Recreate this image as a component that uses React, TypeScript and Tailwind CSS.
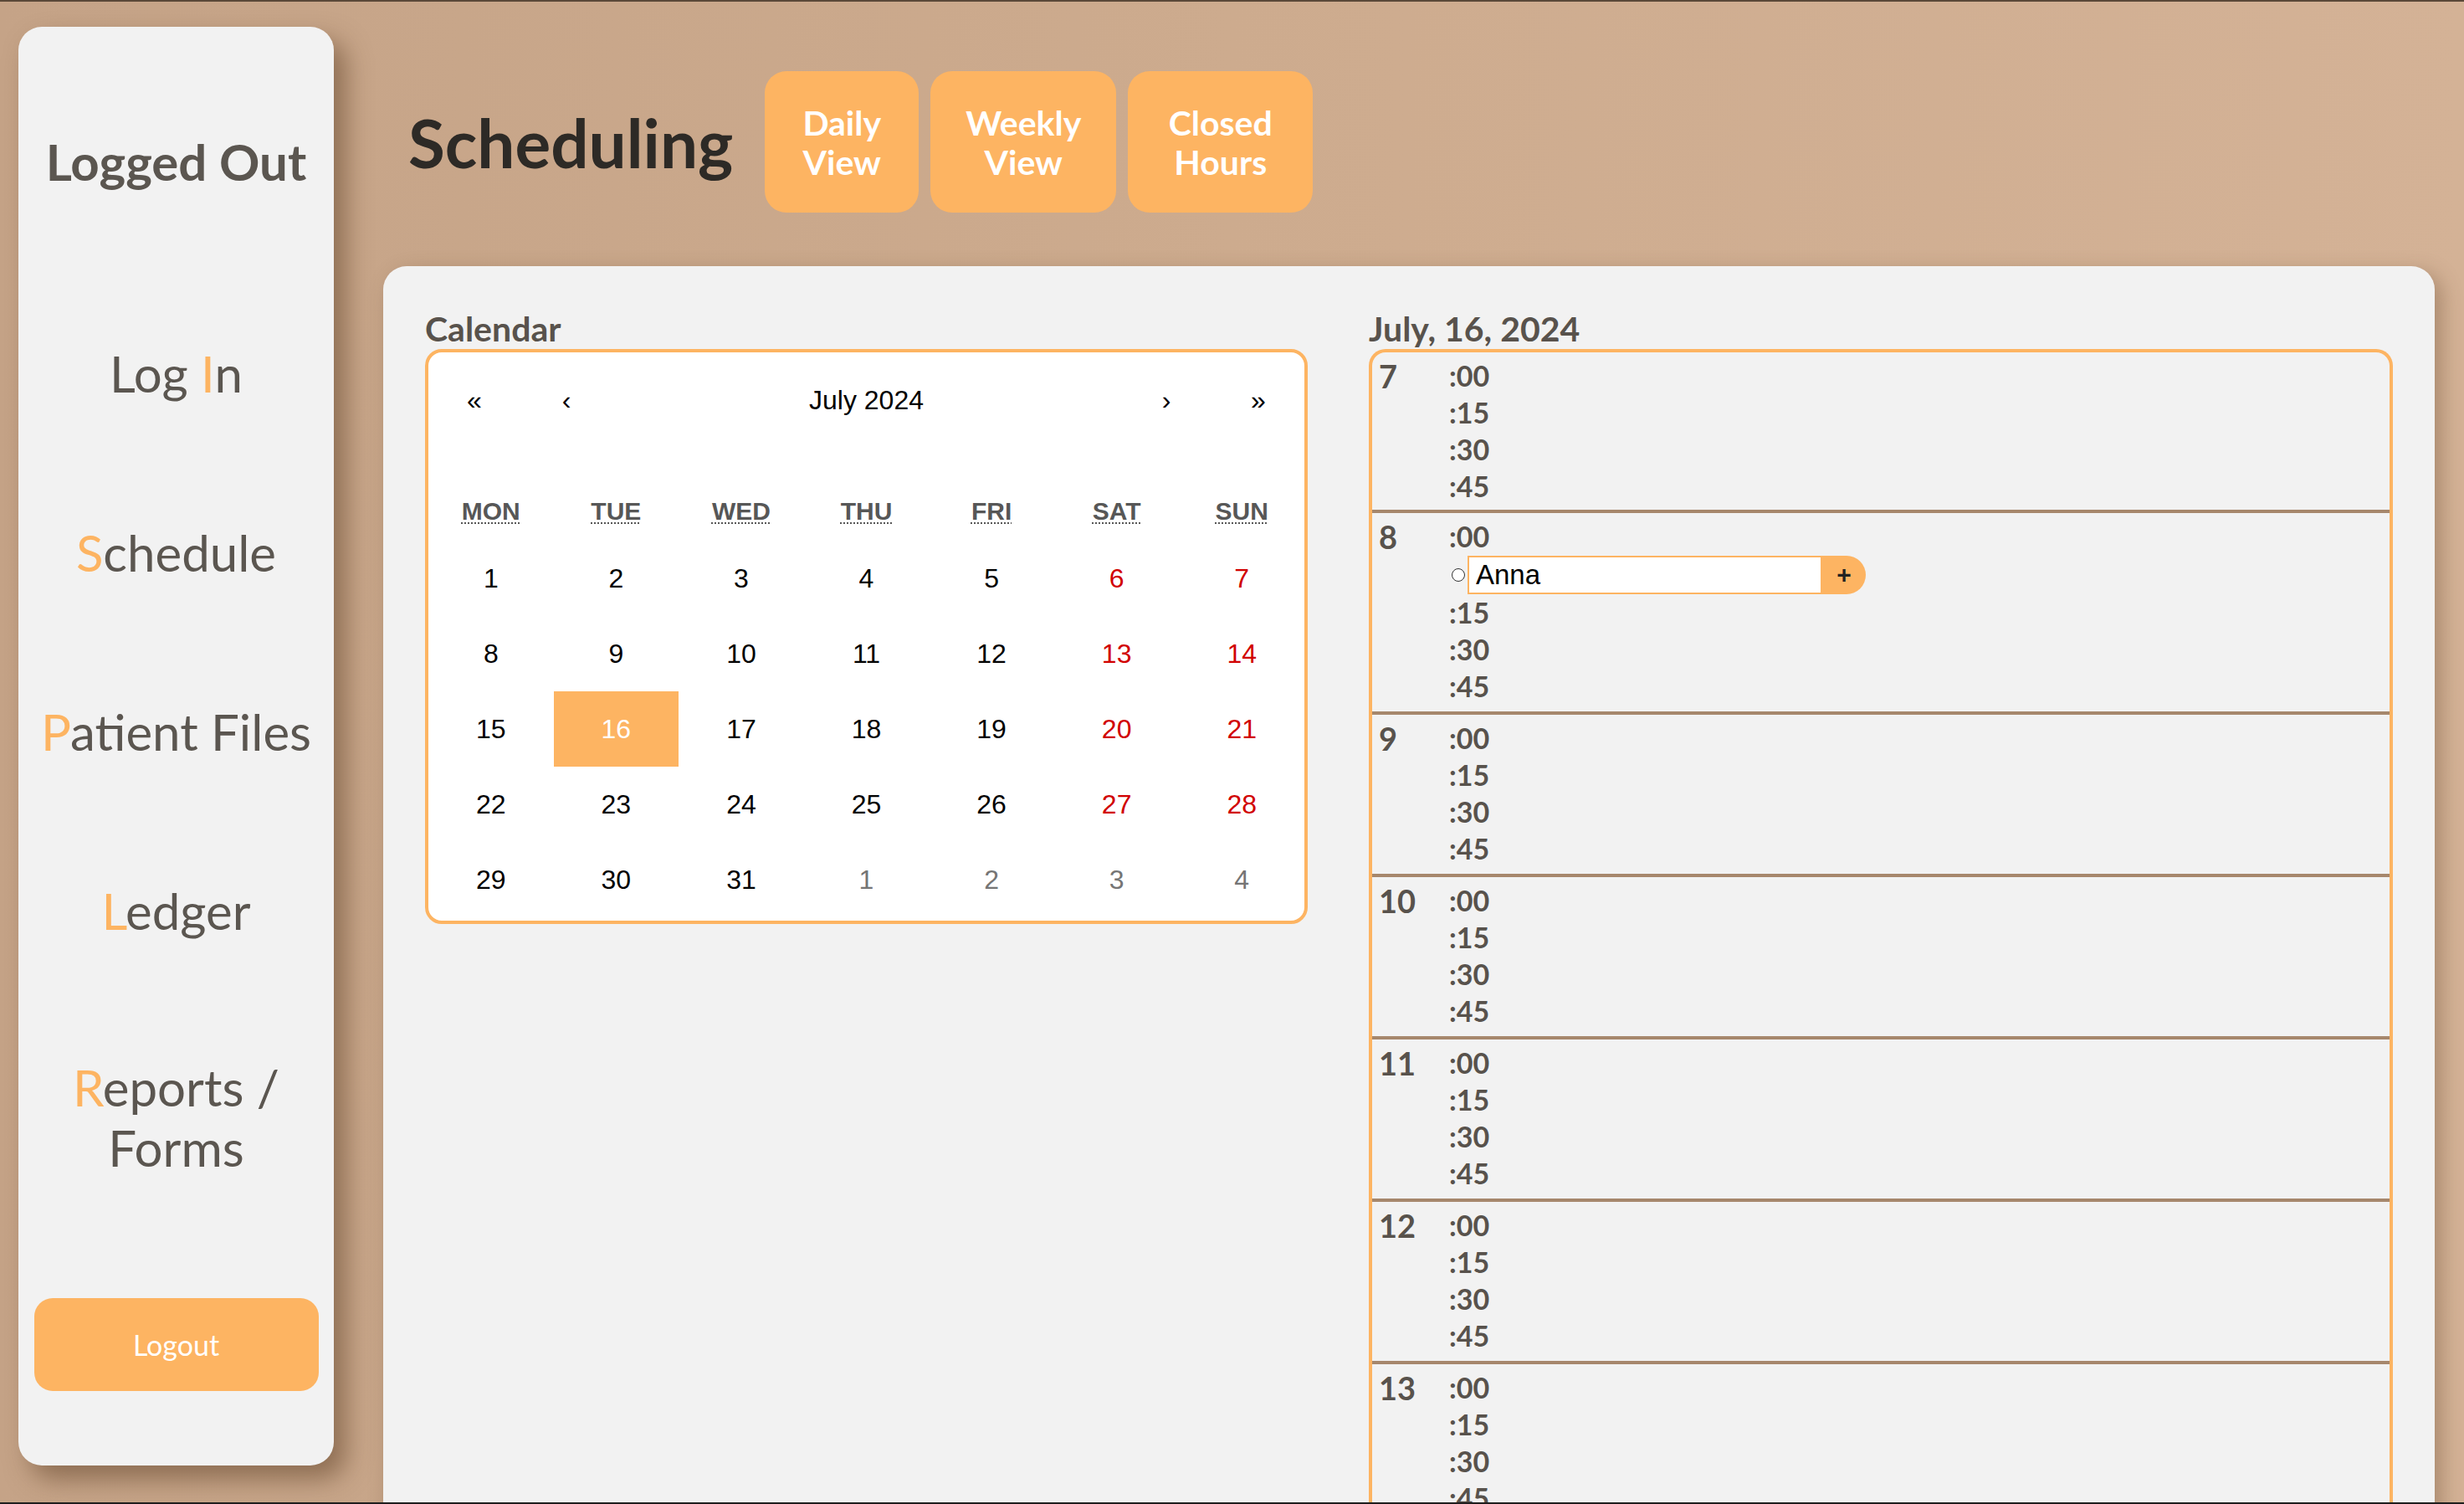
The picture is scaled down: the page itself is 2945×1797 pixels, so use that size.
import React from 'react';

const navItems: { first: string; rest: string; pre?: string }[] = [
  { pre: 'Log ', first: 'I', rest: 'n' },
  { first: 'S', rest: 'chedule' },
  { first: 'P', rest: 'atient Files' },
  { first: 'L', rest: 'edger' },
];

const weekdays = ['MON', 'TUE', 'WED', 'THU', 'FRI', 'SAT', 'SUN'];

const days: { n: number; other?: boolean }[] = [
  ...Array.from({ length: 31 }, (_, i) => ({ n: i + 1 })),
  { n: 1, other: true },
  { n: 2, other: true },
  { n: 3, other: true },
  { n: 4, other: true },
];

const hours = [7, 8, 9, 10, 11, 12, 13, 14, 15];
const minutes = [':00', ':15', ':30', ':45'];

const Sidebar: React.FC = () => (
  <aside className="w-[377px] h-[1719px] shrink-0 rounded-[28px] bg-[#f2f2f2] shadow-[14px_16px_30px_rgba(85,55,30,0.5)] flex flex-col items-center pt-[125px] text-[60px] leading-[72px] text-[#5b5650] font-['Lato',sans-serif]">
    <div className="font-bold">Logged Out</div>
    {navItems.map((item, i) => (
      <div key={i} className={i === 0 ? 'mt-[181px]' : 'mt-[142px]'}>
        {item.pre}
        <span className="text-[#fdb462]">{item.first}</span>
        {item.rest}
      </div>
    ))}
    <div className="mt-[139px] text-center">
      <span className="text-[#fdb462]">R</span>eports /
      <br />
      Forms
    </div>
    <button className="mt-[144px] w-[340px] h-[111px] rounded-[22px] bg-[#fdb462] text-white text-[34px] leading-none">
      Logout
    </button>
  </aside>
);

const Calendar: React.FC = () => (
  <div className="border-4 border-[#fdb462] rounded-[20px] bg-white pb-[4px] font-['Liberation_Sans',Arial,sans-serif] text-black">
    <div className="flex h-[114px] items-center text-[32px]">
      <span className="w-[110px] text-center">«</span>
      <span className="w-[110px] text-center">‹</span>
      <span className="flex-1 text-center">July 2024</span>
      <span className="w-[110px] text-center">›</span>
      <span className="w-[110px] text-center">»</span>
    </div>
    <div className="grid grid-cols-7 h-[72px] mt-[39px] items-center text-center text-[30px] font-bold text-[#575757]">
      {weekdays.map((d) => (
        <abbr key={d} title={d} className="underline decoration-dotted underline-offset-[4px] decoration-2">
          {d}
        </abbr>
      ))}
    </div>
    <div className="grid grid-cols-7">
      {days.map((d, i) => {
        const col = i % 7;
        const active = !d.other && d.n === 16;
        let color = 'text-black';
        if (d.other) color = 'text-[#757575]';
        else if (col >= 5) color = 'text-[#d10000]';
        if (active) color = 'text-white bg-[#fdb462]';
        return (
          <div key={i} className={`h-[90px] flex items-center justify-center text-[32px] ${color}`}>
            {d.n}
          </div>
        );
      })}
    </div>
  </div>
);

const DaySchedule: React.FC = () => (
  <div className="border-4 border-b-0 border-[#fdb462] rounded-t-[20px] text-[#58524c] font-['Lato',sans-serif] font-bold">
    {hours.map((h) => (
      <div key={h} className={`flex pl-[8px] pt-[6px] border-b-4 border-[#a6876c] ${h === 7 ? 'pb-[6px]' : 'pb-[8px]'}`}>
        <div className="w-[84px] text-[38px] leading-[44px]">{h}</div>
        <div className="flex flex-col text-[34px] leading-[44px]">
          <div>:00</div>
          {h === 8 && (
            <div className="flex items-center h-[47px]">
              <span className="ml-[3px] w-[16px] h-[16px] rounded-full border-[1.5px] border-[#333] bg-white" />
              <input
                readOnly
                value="Anna"
                className="ml-[3px] w-[424px] h-[46px] border-2 border-[#fdb462] bg-white pl-[8px] text-[33px] text-black font-normal font-['Liberation_Sans',Arial,sans-serif] outline-none"
              />
              <button className="w-[52px] h-[46px] rounded-r-full bg-[#fdb462] text-[#222] text-[30px] font-bold font-['Liberation_Sans',Arial,sans-serif] leading-none">
                +
              </button>
            </div>
          )}
          {minutes.slice(1).map((m) => (
            <div key={m}>{m}</div>
          ))}
        </div>
      </div>
    ))}
  </div>
);

export default function App() {
  return (
    <div className="h-[1797px] overflow-hidden border-t-2 border-b-2 border-t-[#5a4838] border-b-[#1e1e1e] bg-linear-to-r from-[#c5a387] via-[#cdab8e] to-[#d4b296] flex pl-[22px] pt-[30px] font-['Lato',sans-serif]">
      <Sidebar />
      <main className="flex-1 ml-[59px] mr-[35px] flex flex-col">
        <header className="flex items-center pl-[30px] mt-[53px] h-[169px]">
          <h1 className="text-[80px] font-bold leading-none text-[#2d2a26]">Scheduling</h1>
          <div className="flex gap-[14px] ml-[38px]">
            {[
              { l1: 'Daily', l2: 'View', w: 'w-[184px]' },
              { l1: 'Weekly', l2: 'View', w: 'w-[222px]' },
              { l1: 'Closed', l2: 'Hours', w: 'w-[221px]' },
            ].map((b) => (
              <button
                key={b.l1}
                className={`${b.w} h-[169px] rounded-[26px] bg-[#fdb462] text-white font-bold text-[41px] leading-[47px] flex flex-col items-center justify-center`}
              >
                <span>{b.l1}</span>
                <span>{b.l2}</span>
              </button>
            ))}
          </div>
        </header>
        <section className="mt-[64px] flex-1 bg-[#f2f2f2] rounded-t-[28px] shadow-[8px_8px_24px_rgba(90,60,35,0.35)] pt-[50px] px-[50px] flex gap-[73px]">
          <div className="w-[1055px] shrink-0">
            <h2 className="text-[41px] leading-[49px] font-bold text-[#58524c]">Calendar</h2>
            <Calendar />
          </div>
          <div className="flex-1">
            <h2 className="text-[41px] leading-[49px] font-bold text-[#58524c]">July, 16, 2024</h2>
            <DaySchedule />
          </div>
        </section>
      </main>
    </div>
  );
}
